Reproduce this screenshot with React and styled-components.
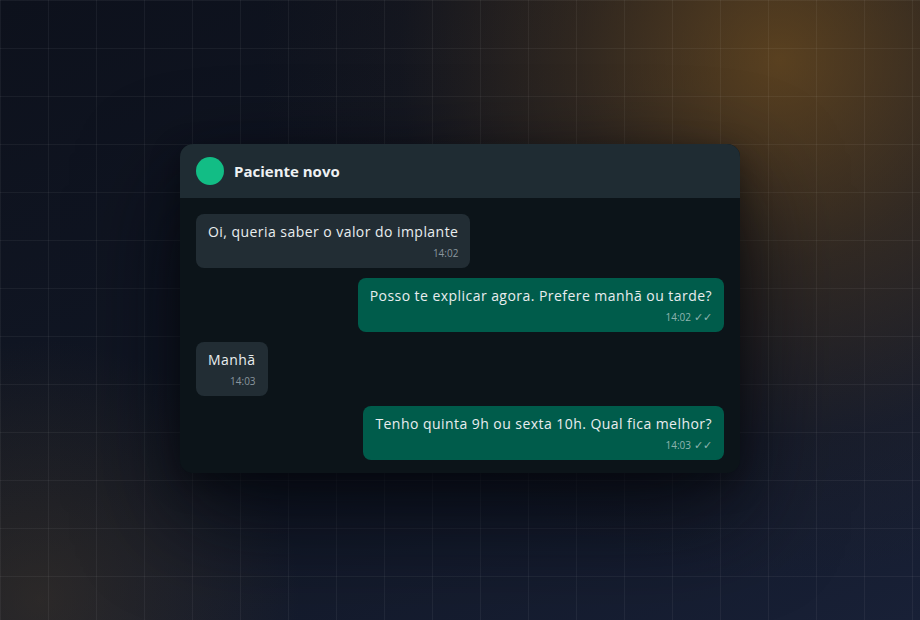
import React from 'react';
import styled, { createGlobalStyle } from 'styled-components';

const messages = [
    { id: 1, out: false, text: 'Oi, queria saber o valor do implante', time: '14:02' },
    { id: 2, out: true, text: 'Posso te explicar agora. Prefere manhã ou tarde?', time: '14:02' },
    { id: 3, out: false, text: 'Manhã', time: '14:03' },
    { id: 4, out: true, text: 'Tenho quinta 9h ou sexta 10h. Qual fica melhor?', time: '14:03' },
];

const App = () => {
    return (
        <>
            <GlobalStyle />
            <Page>
                <ChatCard>
                    <ChatHeader>
                        <Avatar />
                        <ContactName>Paciente novo</ContactName>
                    </ChatHeader>
                    <MessageList>
                        {messages.map(m => (
                            <Bubble key={m.id} $out={m.out}>
                                <BubbleText>{m.text}</BubbleText>
                                <Meta $out={m.out}>
                                    {m.time}{m.out && <Ticks>✓✓</Ticks>}
                                </Meta>
                            </Bubble>
                        ))}
                    </MessageList>
                </ChatCard>
            </Page>
        </>
    );
};

export default App;

const GlobalStyle = createGlobalStyle`
    html, body {
        margin: 0;
        padding: 0;
        background: #0e1320;
    }
    body {
        font-family: 'Open Sans', 'Liberation Sans', sans-serif;
    }
`;

const Page = styled.div`
    box-sizing: border-box;
    width: 920px;
    height: 620px;
    padding-bottom: 4px;
    overflow: hidden;
    display: flex;
    align-items: center;
    justify-content: center;
    background-color: #0f1422;
    background-image:
        linear-gradient(rgba(255, 255, 255, 0.05) 1px, transparent 1px),
        linear-gradient(90deg, rgba(255, 255, 255, 0.05) 1px, transparent 1px),
        radial-gradient(circle at 780px 60px, rgba(150, 100, 30, 0.55) 0, rgba(110, 75, 30, 0.35) 200px, rgba(60, 45, 30, 0.12) 380px, transparent 520px),
        radial-gradient(circle at 40px 600px, rgba(90, 70, 40, 0.35) 0, transparent 260px),
        linear-gradient(160deg, #0d111c 0%, #111725 55%, #182036 100%);
    background-size: 48px 48px, 48px 48px, 100% 100%, 100% 100%, 100% 100%;
`;

const ChatCard = styled.div`
    width: 560px;
    border-radius: 13px;
    overflow: hidden;
    background: #0c1419;
    box-shadow: 0 40px 100px rgba(4, 6, 12, 0.8), 0 10px 30px rgba(0, 0, 0, 0.4);
`;

const ChatHeader = styled.div`
    height: 54px;
    padding: 0 16px;
    display: flex;
    align-items: center;
    gap: 10px;
    background: #1f2c33;
`;

const Avatar = styled.div`
    width: 28px;
    height: 28px;
    border-radius: 50%;
    background: #12bd85;
`;

const ContactName = styled.div`
    color: #eef1f3;
    font-size: 15px;
    font-weight: 700;
`;

const MessageList = styled.div`
    display: flex;
    flex-direction: column;
    gap: 10px;
    padding: 16px 16px 13px;
`;

const Bubble = styled.div`
    align-self: ${p => (p.$out ? 'flex-end' : 'flex-start')};
    display: flex;
    flex-direction: column;
    padding: 8px 12px 8px;
    border-radius: 8px;
    background: ${p => (p.$out ? '#005c4b' : '#222d34')};
`;

const BubbleText = styled.div`
    color: #e9edef;
    font-size: 14px;
    line-height: 20px;
    letter-spacing: 0.45px;
`;

const Meta = styled.div`
    align-self: flex-end;
    margin-top: 4px;
    font-size: 10px;
    line-height: 14px;
    color: ${p => (p.$out ? 'rgba(233, 237, 239, 0.62)' : '#8a969e')};
`;

const Ticks = styled.span`
    margin-left: 3px;
    font-size: 11px;
`;
